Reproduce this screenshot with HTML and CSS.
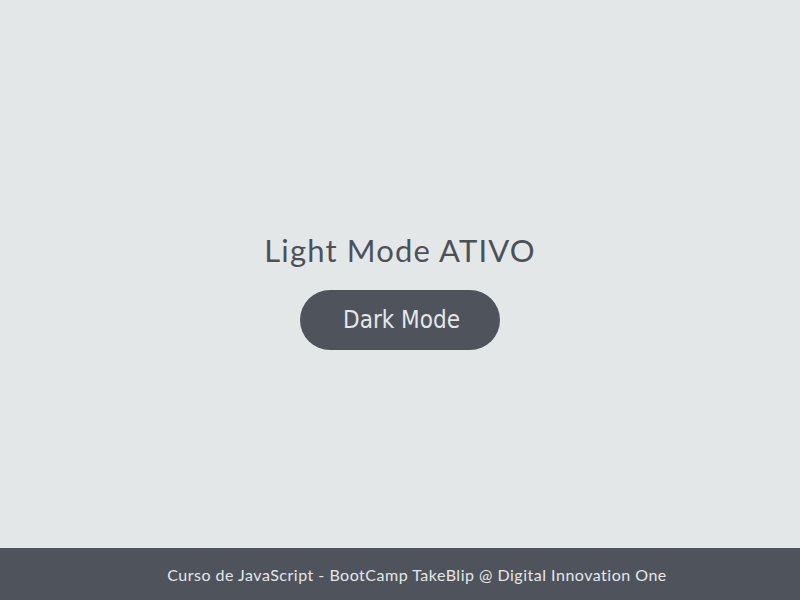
FILE: index.html
```html
<!DOCTYPE html>
<html lang="pt-BR">
<head>
<meta charset="utf-8">
<title>Dark Mode</title>
<link rel="stylesheet" href="styles.css">
</head>
<body>
<main class="content">
  <h1 class="title">Light Mode ATIVO</h1>
  <button class="toggle">Dark Mode</button>
</main>
<footer class="footer">Curso de JavaScript - BootCamp TakeBlip @ Digital Innovation One</footer>
</body>
</html>
```
FILE: styles.css
```css
html, body { margin: 0; padding: 0; height: 100%; }
body {
  background: #e4e7e8;
  color: #4c5159;
  font-family: "Lato", "Noto Sans", sans-serif;
  display: flex;
  flex-direction: column;
  min-height: 100vh;
}
.content {
  flex: 1;
  display: flex;
  flex-direction: column;
  align-items: center;
  justify-content: center;
  padding-top: 34px;
}
.title {
  font-size: 31px;
  font-weight: 400;
  margin: 0 0 22px;
  line-height: 36px;
  letter-spacing: 1.15px;
}
.toggle {
  width: 200px;
  height: 60px;
  border: none;
  border-radius: 30px;
  background: #4f545c;
  color: #e4e7e8;
  font-family: "DejaVu Sans Condensed", "DejaVu Sans", sans-serif;
  font-size: 24px;
  padding: 0 0 0 3px;
  cursor: pointer;
}
.footer {
  height: 52px;
  background: #4f545c;
  color: #e4e7e8;
  display: flex;
  align-items: center;
  justify-content: center;
  font-size: 16px;
  letter-spacing: 0.5px;
  padding-left: 34px;
}
```
